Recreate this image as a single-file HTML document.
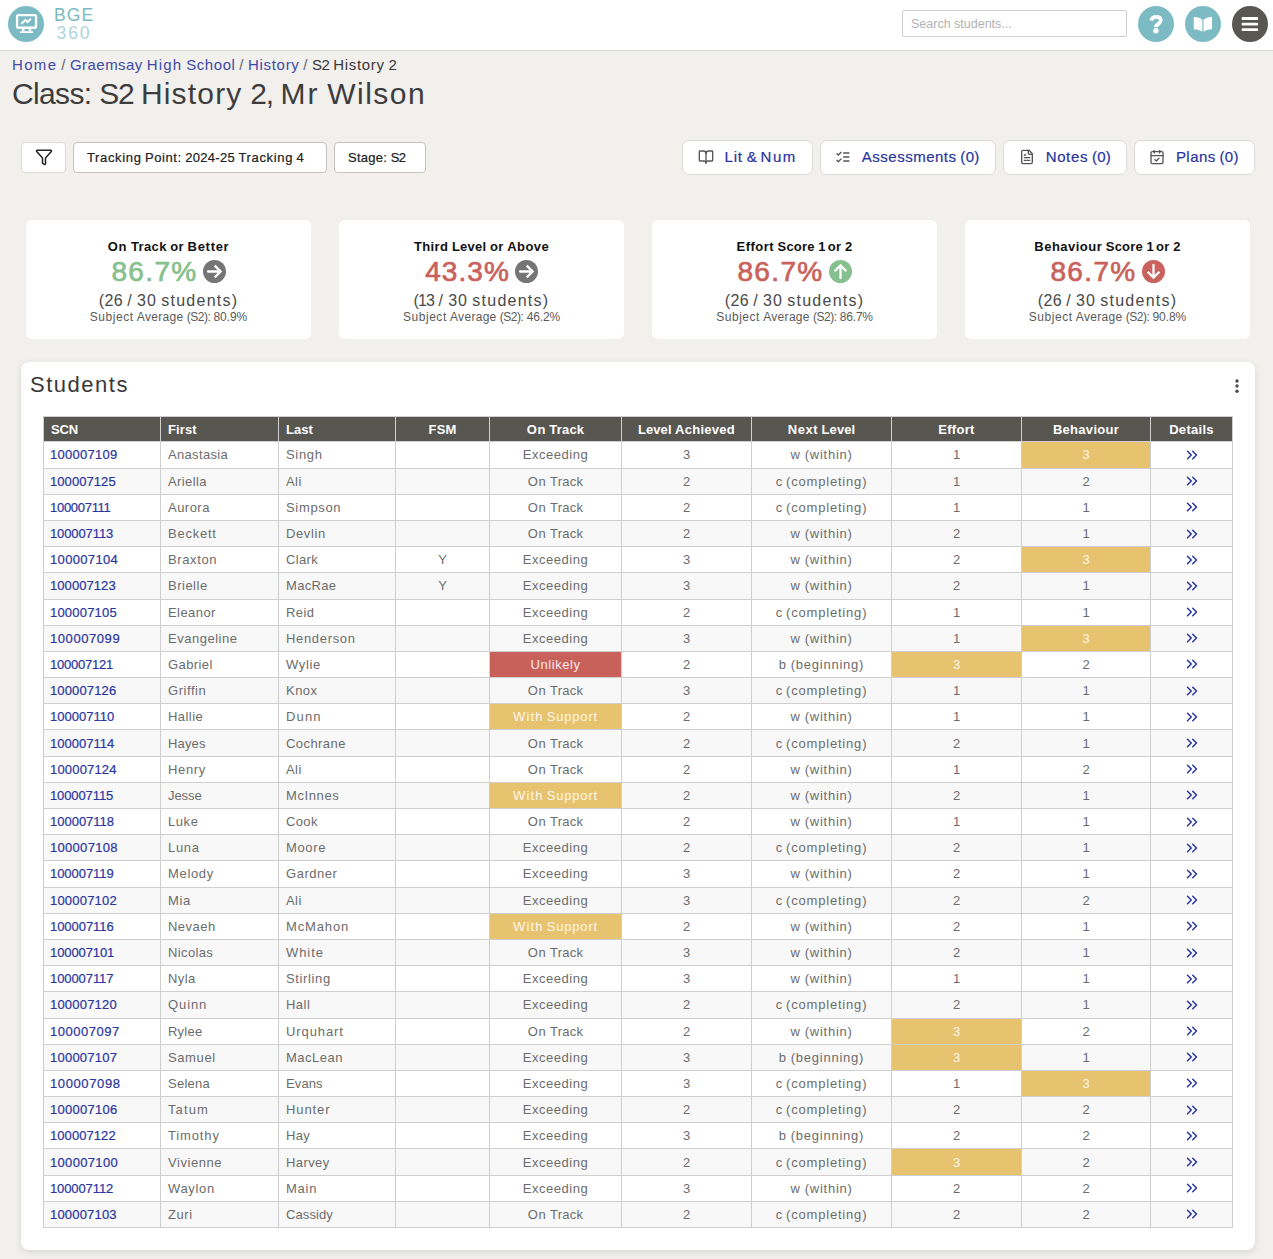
<!DOCTYPE html>
<html lang="en"><head><meta charset="utf-8"><title>Class: S2 History 2, Mr Wilson</title>
<style>
*{box-sizing:border-box;margin:0;padding:0}
html,body{width:1273px;height:1259px;overflow:hidden}
body{background:#f1f0ed;font-family:"Liberation Sans",sans-serif;color:#222;position:relative}
.t{white-space:nowrap}
a{color:#2a35a0;text-decoration:none}
.abs{position:absolute}
/* header */
#hdr{position:absolute;left:0;top:0;width:1273px;height:51px;background:#fff;border-bottom:1px solid #d9d8d5}
.circ{position:absolute;top:6px;width:36px;height:36px;border-radius:50%;background:#7dbbc4}
.circ svg{position:absolute;left:0;top:0}
#logo1{position:absolute;left:54px;top:5px;font-size:17.5px;line-height:20px;font-weight:500;color:#7dbbc4}
#logo2{position:absolute;left:56.5px;top:23px;font-size:17.5px;line-height:20px;font-weight:300;color:#aed5da}
#search{position:absolute;left:902px;top:10px;width:225px;height:27px;border:1px solid #cfcfcf;border-radius:2px;background:#fff;font-family:"Liberation Sans",sans-serif;font-size:12.5px;line-height:27px;color:#b2b2b2;padding-left:8px}
/* breadcrumb + title */
#bc{position:absolute;left:12px;top:55px;font-size:15px;line-height:20px;color:#383838;white-space:nowrap}
#bc .sep{color:#666}
#bc a{color:#3f49a8}
#ttl{position:absolute;left:12px;top:76px;font-size:30px;line-height:36px;font-weight:400;color:#3d3d3d;white-space:nowrap}
/* toolbar */
.btn{position:absolute;background:#fff;border:1px solid #dcdbd8;border-radius:5px}
.btn .t{position:absolute;top:0}
.fb{top:142px;height:31px;font-size:13px;line-height:29px;font-weight:500;color:#222;border-color:#c4c3c0;border-radius:4px}
.nb{top:140px;height:35px;font-size:15px;line-height:31px;font-weight:500;color:#2a35a0;border-radius:7px}
.nb svg{position:absolute}
/* stat cards */
.stat{position:absolute;top:220px;width:285px;height:119px;background:#fff;border-radius:6px}
.stat div{position:absolute;left:0;width:285px;text-align:center;white-space:nowrap}
.stat .h{top:18px;font-size:13px;line-height:18px;font-weight:600;color:#111}
.stat .p{top:34px;font-size:28px;line-height:36px;font-weight:400}
.sp{-webkit-text-stroke:.7px currentColor}
.stat .p svg{vertical-align:-2px;margin-left:5px}
.stat .n{top:71px;font-size:16px;line-height:20px;color:#494949}
.stat .a{top:89px;font-size:12px;line-height:16px;color:#5a5a5a}
.grn{color:#86c08e}.rd{color:#c9625c}
/* students card */
#card{position:absolute;left:21px;top:362px;width:1234px;height:888px;background:#fff;border-radius:8px;box-shadow:0 2px 7px rgba(0,0,0,.11)}
#card h2{position:absolute;left:9px;top:8px;font-size:22px;line-height:30px;font-weight:400;color:#393939}
#dots{position:absolute;left:1213px;top:16px}
table{position:absolute;left:22px;top:54.4px;width:1189px;border-collapse:collapse;table-layout:fixed;font-size:13px}
th,td{border:1px solid #cfcfcf;padding:0 7px;white-space:nowrap;overflow:hidden;text-align:left}
th{background:#585651;color:#fff;font-weight:600;height:25px;line-height:23px;border-color:#cfcfcf}
td{height:26.2px;line-height:25px;color:#6c6c6c}
td:first-child{padding-left:6px}
tr:nth-child(even) td{background:#f8f8f8}
.c{text-align:center}
td.amb{background:#e7c370 !important;color:#fcf7eb}
td.red{background:#c8615a !important;color:#f8eae9}
.chev{display:block;margin:0 auto}
.scn{font-weight:500}
#logo1{-webkit-text-stroke:.05px currentColor}
.nb .t,.fb .t,.scn{-webkit-text-stroke:.21px currentColor}
</style></head>
<body>
<div id="hdr">
  <div class="circ" style="left:8px"><svg width="36" height="36" viewBox="0 0 36 36"><rect x="9.05" y="9.15" width="19" height="12.6" rx="1.5" fill="none" stroke="#fff" stroke-width="2.3"/><rect x="14.1" y="22.6" width="2.4" height="2.8" fill="#fff"/><rect x="20.8" y="22.6" width="2.4" height="2.8" fill="#fff"/><rect x="12" y="25.2" width="13" height="1.9" rx=".4" fill="#fff"/><path d="M13.4 17.9l4.1-4 1.9 2.2 3.6-3.3" fill="none" stroke="#fff" stroke-width="2"/></svg></div>
  <div id="logo1"><span class="t logo1" style="letter-spacing:1.14px">BGE</span></div>
  <div id="logo2"><span class="t logo2" style="letter-spacing:1.9px">360</span></div>
  <div id="search">Search students...</div>
  <div class="circ" style="left:1138px"><svg width="36" height="36" viewBox="0 0 36 36"><path d="M13.2 14.4C13.9 11.9 15.8 10.9 18.2 10.9c2.8 0 4.5 1.5 4.5 3.6 0 3.5-4.7 3.2-4.7 6.7" fill="none" stroke="#fff" stroke-width="3.7"/><circle cx="17.9" cy="24.7" r="2.7" fill="#fff"/></svg></div>
  <div class="circ" style="left:1185px"><svg width="36" height="36" viewBox="0 0 36 36"><path d="M8.75 11.1c2.8 0 5.8.7 8.1 2.3v12.05c-2.3-1.45-5.3-2.15-8.1-2.25zM27.05 11.1c-2.8 0-5.8.7-8.1 2.3v12.05c2.3-1.45 5.3-2.15 8.1-2.25z" fill="#fff"/><rect x="16.85" y="13.5" width="2.1" height="11.9" fill="#fff" fill-opacity=".45"/></svg></div>
  <div class="circ" style="left:1232px;background:#595751"><svg width="36" height="36" viewBox="0 0 36 36"><rect x="9.7" y="11.1" width="16.4" height="2.8" rx=".7" fill="#fff"/><rect x="9.7" y="16.7" width="16.4" height="2.8" rx=".7" fill="#fff"/><rect x="9.7" y="22.3" width="16.4" height="2.8" rx=".7" fill="#fff"/></svg></div>
</div>
<div id="bc"><a><span class="t bc" style="letter-spacing:1.34px">Home</span></a><span class="sep"><span class="t bc" style="word-spacing:-0.33px"> <span class="w" style="letter-spacing:0.73px">/</span> </span></span><a><span class="t bc" style="word-spacing:-0.33px"><span class="w" style="letter-spacing:0.46px">Graemsay</span> <span class="w" style="letter-spacing:1.21px">High</span> <span class="w" style="letter-spacing:0.56px">School</span></span></a><span class="sep"><span class="t bc" style="word-spacing:-0.33px"> <span class="w" style="letter-spacing:0.73px">/</span> </span></span><a><span class="t bc" style="letter-spacing:0.68px">History</span></a><span class="sep"><span class="t bc" style="word-spacing:-0.33px"> <span class="w" style="letter-spacing:0.73px">/</span> </span></span><span class="t bcl" style="word-spacing:-0.33px"><span class="w" style="letter-spacing:-0.53px">S2</span> <span class="w" style="letter-spacing:0.68px">History</span> <span class="w" style="letter-spacing:-0.03px">2</span></span></div>
<div id="ttl"><span class="t ttl" style="word-spacing:-0.76px"><span class="w" style="letter-spacing:-0.63px">Class:</span> <span class="w" style="letter-spacing:-1.27px">S2</span> <span class="w" style="letter-spacing:1.19px">History</span> <span class="w" style="letter-spacing:-1.11px">2,</span> <span class="w" style="letter-spacing:2.09px">Mr</span> <span class="w" style="letter-spacing:1.47px">Wilson</span></span></div>

<div class="btn fb" style="left:21px;width:45px;border-color:#dcdbd8"><svg width="18" height="18" viewBox="0 0 24 24" style="position:absolute;left:13.2px;top:4.9px" fill="none" stroke="#222" stroke-width="2" stroke-linecap="round" stroke-linejoin="round"><path d="M10 20a1 1 0 0 0 .553.895l2 1A1 1 0 0 0 14 21v-7a2 2 0 0 1 .517-1.341L21.74 4.67A1 1 0 0 0 21 3H3a1 1 0 0 0-.742 1.67l7.225 7.989A2 2 0 0 1 10 14z"/></svg></div>
<div class="btn fb" style="left:73px;width:254px"><span style="position:absolute;left:13px;top:0"><span class="t fb" style="word-spacing:-0.21px"><span class="w" style="letter-spacing:0.65px">Tracking</span> <span class="w" style="letter-spacing:0.59px">Point:</span> <span class="w" style="letter-spacing:0.31px">2024-25</span> <span class="w" style="letter-spacing:0.65px">Tracking</span> <span class="w" style="letter-spacing:1.13px">4</span></span></span></div>
<div class="btn fb" style="left:334px;width:92px"><span style="position:absolute;left:13px;top:0"><span class="t fb" style="word-spacing:-0.21px"><span class="w" style="letter-spacing:0.28px">Stage:</span> <span class="w" style="letter-spacing:-0.48px">S2</span></span></span></div>

<div class="btn nb" style="left:682px;width:131px"><svg width="16" height="16" viewBox="0 0 24 24" style="left:15.1px;top:8px" fill="none" stroke="#555" stroke-width="2" stroke-linecap="round" stroke-linejoin="round"><path d="M12 7v14"/><path d="M3 18a1 1 0 0 1-1-1V4a1 1 0 0 1 1-1h5a4 4 0 0 1 4 4 4 4 0 0 1 4-4h5a1 1 0 0 1 1 1v13a1 1 0 0 1-1 1h-6a3 3 0 0 0-3 3 3 3 0 0 0-3-3z"/></svg><span style="position:absolute;left:41.5px;top:0"><span class="t nb" style="word-spacing:-0.31px"><span class="w" style="letter-spacing:0.85px">Lit</span> <span class="w" style="letter-spacing:-0.19px">&amp;</span> <span class="w" style="letter-spacing:1.6px">Num</span></span></span></div>
<div class="btn nb" style="left:820px;width:175.5px"><svg width="16" height="16" viewBox="0 0 24 24" style="left:13.8px;top:8px" fill="none" stroke="#555" stroke-width="2" stroke-linecap="round" stroke-linejoin="round"><path d="m3 17 2 2 4-4"/><path d="m3 7 2 2 4-4"/><path d="M13 6h8"/><path d="M13 12h8"/><path d="M13 18h8"/></svg><span style="position:absolute;left:40.8px;top:0"><span class="t nb" style="word-spacing:-0.31px"><span class="w" style="letter-spacing:0.5px">Assessments</span> <span class="w" style="letter-spacing:0.3px">(0)</span></span></span></div>
<div class="btn nb" style="left:1003px;width:124px"><svg width="16" height="16" viewBox="0 0 24 24" style="left:15.2px;top:8px" fill="none" stroke="#555" stroke-width="2" stroke-linecap="round" stroke-linejoin="round"><path d="M15 2H6a2 2 0 0 0-2 2v16a2 2 0 0 0 2 2h12a2 2 0 0 0 2-2V7Z"/><path d="M14 2v4a2 2 0 0 0 2 2h4"/><path d="M10 9H8"/><path d="M16 13H8"/><path d="M16 17H8"/></svg><span style="position:absolute;left:41.7px;top:0"><span class="t nb" style="word-spacing:-0.31px"><span class="w" style="letter-spacing:0.63px">Notes</span> <span class="w" style="letter-spacing:0.3px">(0)</span></span></span></div>
<div class="btn nb" style="left:1134px;width:121px"><svg width="16" height="16" viewBox="0 0 24 24" style="left:13.5px;top:8px" fill="none" stroke="#555" stroke-width="2" stroke-linecap="round" stroke-linejoin="round"><path d="M8 2v4"/><path d="M16 2v4"/><rect width="18" height="18" x="3" y="4" rx="2"/><path d="M3 10h18"/><path d="m9 16 2 2 4-4"/></svg><span style="position:absolute;left:40.9px;top:0"><span class="t nb" style="word-spacing:-0.31px"><span class="w" style="letter-spacing:0.46px">Plans</span> <span class="w" style="letter-spacing:0.3px">(0)</span></span></span></div>

<div class="stat" style="left:26px"><div class="h"><span class="t sh" style="word-spacing:-0.06px"><span class="w" style="letter-spacing:0.8px">On</span> <span class="w" style="letter-spacing:0.38px">Track</span> <span class="w" style="letter-spacing:0.36px">or</span> <span class="w" style="letter-spacing:0.69px">Better</span></span></div><div class="p grn"><span class="t sp" style="letter-spacing:1.35px">86.7%</span><svg width="23" height="23" viewBox="0 0 23 23"><circle cx="11.5" cy="11.5" r="11.5" fill="#757575"/><path d="M5 11.5h12" fill="none" stroke="#fff" stroke-width="2.3" stroke-linecap="round"/><path d="M11.7 5.6l5.9 5.9-5.9 5.9" fill="none" stroke="#fff" stroke-width="2.3" stroke-linejoin="miter"/></svg></div><div class="n"><span class="t sn" style="word-spacing:-0.18px"><span class="w" style="letter-spacing:0.43px">(26</span> <span class="w" style="letter-spacing:1.01px">/</span> <span class="w" style="letter-spacing:1.06px">30</span> <span class="w" style="letter-spacing:1.25px">students)</span></span></div><div class="a"><span class="t sa" style="word-spacing:-0.1px"><span class="w" style="letter-spacing:0.54px">Subject</span> <span class="w" style="letter-spacing:0.3px">Average</span> <span class="w" style="letter-spacing:-0.49px">(S2):</span> <span class="w" style="letter-spacing:-0.06px">80.9%</span></span></div></div>
<div class="stat" style="left:339px"><div class="h"><span class="t sh" style="word-spacing:-0.06px"><span class="w" style="letter-spacing:0.38px">Third</span> <span class="w" style="letter-spacing:0.25px">Level</span> <span class="w" style="letter-spacing:0.36px">or</span> <span class="w" style="letter-spacing:0.42px">Above</span></span></div><div class="p rd"><span class="t sp" style="letter-spacing:1.06px">43.3%</span><svg width="23" height="23" viewBox="0 0 23 23"><circle cx="11.5" cy="11.5" r="11.5" fill="#757575"/><path d="M5 11.5h12" fill="none" stroke="#fff" stroke-width="2.3" stroke-linecap="round"/><path d="M11.7 5.6l5.9 5.9-5.9 5.9" fill="none" stroke="#fff" stroke-width="2.3" stroke-linejoin="miter"/></svg></div><div class="n"><span class="t sn" style="word-spacing:-0.18px"><span class="w" style="letter-spacing:-0.86px">(13</span> <span class="w" style="letter-spacing:1.01px">/</span> <span class="w" style="letter-spacing:1.06px">30</span> <span class="w" style="letter-spacing:1.25px">students)</span></span></div><div class="a"><span class="t sa" style="word-spacing:-0.1px"><span class="w" style="letter-spacing:0.54px">Subject</span> <span class="w" style="letter-spacing:0.3px">Average</span> <span class="w" style="letter-spacing:-0.49px">(S2):</span> <span class="w" style="letter-spacing:-0.13px">46.2%</span></span></div></div>
<div class="stat" style="left:652px"><div class="h"><span class="t sh" style="word-spacing:-0.06px"><span class="w" style="letter-spacing:0.46px">Effort</span> <span class="w" style="letter-spacing:0.18px">Score</span> <span class="w" style="letter-spacing:-1.3px">1</span> <span class="w" style="letter-spacing:0.36px">or</span> <span class="w" style="letter-spacing:0.27px">2</span></span></div><div class="p rd"><span class="t sp" style="letter-spacing:1.35px">86.7%</span><svg width="23" height="23" viewBox="0 0 23 23"><circle cx="11.5" cy="11.5" r="11.5" fill="#86c08e"/><path d="M11.5 18v-12" fill="none" stroke="#fff" stroke-width="2.3" stroke-linecap="round"/><path d="M5.6 11.3l5.9-5.9 5.9 5.9" fill="none" stroke="#fff" stroke-width="2.3" stroke-linejoin="miter"/></svg></div><div class="n"><span class="t sn" style="word-spacing:-0.18px"><span class="w" style="letter-spacing:0.43px">(26</span> <span class="w" style="letter-spacing:1.01px">/</span> <span class="w" style="letter-spacing:1.06px">30</span> <span class="w" style="letter-spacing:1.25px">students)</span></span></div><div class="a"><span class="t sa" style="word-spacing:-0.1px"><span class="w" style="letter-spacing:0.54px">Subject</span> <span class="w" style="letter-spacing:0.3px">Average</span> <span class="w" style="letter-spacing:-0.49px">(S2):</span> <span class="w" style="letter-spacing:-0.21px">86.7%</span></span></div></div>
<div class="stat" style="left:965px"><div class="h"><span class="t sh" style="word-spacing:-0.06px"><span class="w" style="letter-spacing:0.48px">Behaviour</span> <span class="w" style="letter-spacing:0.18px">Score</span> <span class="w" style="letter-spacing:-1.3px">1</span> <span class="w" style="letter-spacing:0.36px">or</span> <span class="w" style="letter-spacing:0.27px">2</span></span></div><div class="p rd"><span class="t sp" style="letter-spacing:1.35px">86.7%</span><svg width="23" height="23" viewBox="0 0 23 23"><circle cx="11.5" cy="11.5" r="11.5" fill="#c9625c"/><path d="M11.5 5v12" fill="none" stroke="#fff" stroke-width="2.3" stroke-linecap="round"/><path d="M5.6 11.7l5.9 5.9 5.9-5.9" fill="none" stroke="#fff" stroke-width="2.3" stroke-linejoin="miter"/></svg></div><div class="n"><span class="t sn" style="word-spacing:-0.18px"><span class="w" style="letter-spacing:0.43px">(26</span> <span class="w" style="letter-spacing:1.01px">/</span> <span class="w" style="letter-spacing:1.06px">30</span> <span class="w" style="letter-spacing:1.25px">students)</span></span></div><div class="a"><span class="t sa" style="word-spacing:-0.1px"><span class="w" style="letter-spacing:0.54px">Subject</span> <span class="w" style="letter-spacing:0.3px">Average</span> <span class="w" style="letter-spacing:-0.49px">(S2):</span> <span class="w" style="letter-spacing:-0.06px">90.8%</span></span></div></div>

<div id="card">
<h2><span class="t h2" style="letter-spacing:1.52px">Students</span></h2>
<svg id="dots" width="6" height="18" viewBox="0 0 6 18"><circle cx="3" cy="3" r="1.7" fill="#4f4d48"/><circle cx="3" cy="8" r="1.7" fill="#4f4d48"/><circle cx="3" cy="13.2" r="1.7" fill="#4f4d48"/></svg>
<table>
<colgroup><col style="width:117px"><col style="width:118px"><col style="width:117px"><col style="width:94px"><col style="width:132px"><col style="width:130px"><col style="width:140px"><col style="width:130px"><col style="width:129px"><col style="width:82px"></colgroup>
<thead><tr><th><span class="t th" style="letter-spacing:-0.13px">SCN</span></th><th><span class="t th" style="letter-spacing:0.1px">First</span></th><th><span class="t th" style="letter-spacing:0.05px">Last</span></th><th class="c"><span class="t th" style="letter-spacing:0.14px">FSM</span></th><th class="c"><span class="t th" style="word-spacing:-0.15px"><span class="w" style="letter-spacing:0.55px">On</span> <span class="w" style="letter-spacing:0.19px">Track</span></span></th><th class="c"><span class="t th" style="word-spacing:-0.15px"><span class="w" style="letter-spacing:0.07px">Level</span> <span class="w" style="letter-spacing:0.27px">Achieved</span></span></th><th class="c"><span class="t th" style="word-spacing:-0.15px"><span class="w" style="letter-spacing:0.53px">Next</span> <span class="w" style="letter-spacing:0.07px">Level</span></span></th><th class="c"><span class="t th" style="letter-spacing:0.3px">Effort</span></th><th class="c"><span class="t th" style="letter-spacing:0.29px">Behaviour</span></th><th class="c"><span class="t th" style="letter-spacing:0.28px">Details</span></th></tr></thead>
<tbody>
<tr><td><a><span class="t scn" style="letter-spacing:0.26px">100007109</span></a></td><td><span class="t cell" style="letter-spacing:0.33px">Anastasia</span></td><td><span class="t cell" style="letter-spacing:0.67px">Singh</span></td><td class="c"></td><td class="c"><span class="t cell" style="letter-spacing:0.54px">Exceeding</span></td><td class="c"><span class="t cell">3</span></td><td class="c"><span class="t cell" style="word-spacing:-0.35px"><span class="w" style="letter-spacing:1.62px">w</span> <span class="w" style="letter-spacing:0.75px">(within)</span></span></td><td class="c"><span class="t cell">1</span></td><td class="c amb"><span class="t cell">3</span></td><td class="c"><svg class="chev" width="18" height="18" viewBox="0 0 24 24" fill="none" stroke="#2a35a0" stroke-width="2" stroke-linecap="round" stroke-linejoin="round"><path d="m6 17 5-5-5-5"/><path d="m13 17 5-5-5-5"/></svg></td></tr>
<tr><td><a><span class="t scn" style="letter-spacing:0.07px">100007125</span></a></td><td><span class="t cell" style="letter-spacing:0.41px">Ariella</span></td><td><span class="t cell" style="letter-spacing:0.42px">Ali</span></td><td class="c"></td><td class="c"><span class="t cell" style="word-spacing:-0.35px"><span class="w" style="letter-spacing:0.81px">On</span> <span class="w" style="letter-spacing:0.27px">Track</span></span></td><td class="c"><span class="t cell">2</span></td><td class="c"><span class="t cell" style="word-spacing:-0.35px"><span class="w" style="letter-spacing:0.56px">c</span> <span class="w" style="letter-spacing:0.81px">(completing)</span></span></td><td class="c"><span class="t cell">1</span></td><td class="c"><span class="t cell">2</span></td><td class="c"><svg class="chev" width="18" height="18" viewBox="0 0 24 24" fill="none" stroke="#2a35a0" stroke-width="2" stroke-linecap="round" stroke-linejoin="round"><path d="m6 17 5-5-5-5"/><path d="m13 17 5-5-5-5"/></svg></td></tr>
<tr><td><a><span class="t scn" style="letter-spacing:-0.29px">100007111</span></a></td><td><span class="t cell" style="letter-spacing:0.47px">Aurora</span></td><td><span class="t cell" style="letter-spacing:0.67px">Simpson</span></td><td class="c"></td><td class="c"><span class="t cell" style="word-spacing:-0.35px"><span class="w" style="letter-spacing:0.81px">On</span> <span class="w" style="letter-spacing:0.27px">Track</span></span></td><td class="c"><span class="t cell">2</span></td><td class="c"><span class="t cell" style="word-spacing:-0.35px"><span class="w" style="letter-spacing:0.56px">c</span> <span class="w" style="letter-spacing:0.81px">(completing)</span></span></td><td class="c"><span class="t cell">1</span></td><td class="c"><span class="t cell">1</span></td><td class="c"><svg class="chev" width="18" height="18" viewBox="0 0 24 24" fill="none" stroke="#2a35a0" stroke-width="2" stroke-linecap="round" stroke-linejoin="round"><path d="m6 17 5-5-5-5"/><path d="m13 17 5-5-5-5"/></svg></td></tr>
<tr><td><a><span class="t scn" style="letter-spacing:-0.11px">100007113</span></a></td><td><span class="t cell" style="letter-spacing:0.77px">Beckett</span></td><td><span class="t cell" style="letter-spacing:0.61px">Devlin</span></td><td class="c"></td><td class="c"><span class="t cell" style="word-spacing:-0.35px"><span class="w" style="letter-spacing:0.81px">On</span> <span class="w" style="letter-spacing:0.27px">Track</span></span></td><td class="c"><span class="t cell">2</span></td><td class="c"><span class="t cell" style="word-spacing:-0.35px"><span class="w" style="letter-spacing:1.62px">w</span> <span class="w" style="letter-spacing:0.75px">(within)</span></span></td><td class="c"><span class="t cell">2</span></td><td class="c"><span class="t cell">1</span></td><td class="c"><svg class="chev" width="18" height="18" viewBox="0 0 24 24" fill="none" stroke="#2a35a0" stroke-width="2" stroke-linecap="round" stroke-linejoin="round"><path d="m6 17 5-5-5-5"/><path d="m13 17 5-5-5-5"/></svg></td></tr>
<tr><td><a><span class="t scn" style="letter-spacing:0.34px">100007104</span></a></td><td><span class="t cell" style="letter-spacing:0.63px">Braxton</span></td><td><span class="t cell" style="letter-spacing:0.34px">Clark</span></td><td class="c"><span class="t cell">Y</span></td><td class="c"><span class="t cell" style="letter-spacing:0.54px">Exceeding</span></td><td class="c"><span class="t cell">3</span></td><td class="c"><span class="t cell" style="word-spacing:-0.35px"><span class="w" style="letter-spacing:1.62px">w</span> <span class="w" style="letter-spacing:0.75px">(within)</span></span></td><td class="c"><span class="t cell">2</span></td><td class="c amb"><span class="t cell">3</span></td><td class="c"><svg class="chev" width="18" height="18" viewBox="0 0 24 24" fill="none" stroke="#2a35a0" stroke-width="2" stroke-linecap="round" stroke-linejoin="round"><path d="m6 17 5-5-5-5"/><path d="m13 17 5-5-5-5"/></svg></td></tr>
<tr><td><a><span class="t scn" style="letter-spacing:0.07px">100007123</span></a></td><td><span class="t cell" style="letter-spacing:0.5px">Brielle</span></td><td><span class="t cell" style="letter-spacing:0.32px">MacRae</span></td><td class="c"><span class="t cell">Y</span></td><td class="c"><span class="t cell" style="letter-spacing:0.54px">Exceeding</span></td><td class="c"><span class="t cell">3</span></td><td class="c"><span class="t cell" style="word-spacing:-0.35px"><span class="w" style="letter-spacing:1.62px">w</span> <span class="w" style="letter-spacing:0.75px">(within)</span></span></td><td class="c"><span class="t cell">2</span></td><td class="c"><span class="t cell">1</span></td><td class="c"><svg class="chev" width="18" height="18" viewBox="0 0 24 24" fill="none" stroke="#2a35a0" stroke-width="2" stroke-linecap="round" stroke-linejoin="round"><path d="m6 17 5-5-5-5"/><path d="m13 17 5-5-5-5"/></svg></td></tr>
<tr><td><a><span class="t scn" style="letter-spacing:0.2px">100007105</span></a></td><td><span class="t cell" style="letter-spacing:0.43px">Eleanor</span></td><td><span class="t cell" style="letter-spacing:0.43px">Reid</span></td><td class="c"></td><td class="c"><span class="t cell" style="letter-spacing:0.54px">Exceeding</span></td><td class="c"><span class="t cell">2</span></td><td class="c"><span class="t cell" style="word-spacing:-0.35px"><span class="w" style="letter-spacing:0.56px">c</span> <span class="w" style="letter-spacing:0.81px">(completing)</span></span></td><td class="c"><span class="t cell">1</span></td><td class="c"><span class="t cell">1</span></td><td class="c"><svg class="chev" width="18" height="18" viewBox="0 0 24 24" fill="none" stroke="#2a35a0" stroke-width="2" stroke-linecap="round" stroke-linejoin="round"><path d="m6 17 5-5-5-5"/><path d="m13 17 5-5-5-5"/></svg></td></tr>
<tr><td><a><span class="t scn" style="letter-spacing:0.57px">100007099</span></a></td><td><span class="t cell" style="letter-spacing:0.52px">Evangeline</span></td><td><span class="t cell" style="letter-spacing:0.67px">Henderson</span></td><td class="c"></td><td class="c"><span class="t cell" style="letter-spacing:0.54px">Exceeding</span></td><td class="c"><span class="t cell">3</span></td><td class="c"><span class="t cell" style="word-spacing:-0.35px"><span class="w" style="letter-spacing:1.62px">w</span> <span class="w" style="letter-spacing:0.75px">(within)</span></span></td><td class="c"><span class="t cell">1</span></td><td class="c amb"><span class="t cell">3</span></td><td class="c"><svg class="chev" width="18" height="18" viewBox="0 0 24 24" fill="none" stroke="#2a35a0" stroke-width="2" stroke-linecap="round" stroke-linejoin="round"><path d="m6 17 5-5-5-5"/><path d="m13 17 5-5-5-5"/></svg></td></tr>
<tr><td><a><span class="t scn" style="letter-spacing:-0.22px">100007121</span></a></td><td><span class="t cell" style="letter-spacing:0.41px">Gabriel</span></td><td><span class="t cell" style="letter-spacing:0.67px">Wylie</span></td><td class="c"></td><td class="c red"><span class="t cell" style="letter-spacing:0.56px">Unlikely</span></td><td class="c"><span class="t cell">2</span></td><td class="c"><span class="t cell" style="word-spacing:-0.35px"><span class="w" style="letter-spacing:1.27px">b</span> <span class="w" style="letter-spacing:0.77px">(beginning)</span></span></td><td class="c amb"><span class="t cell">3</span></td><td class="c"><span class="t cell">2</span></td><td class="c"><svg class="chev" width="18" height="18" viewBox="0 0 24 24" fill="none" stroke="#2a35a0" stroke-width="2" stroke-linecap="round" stroke-linejoin="round"><path d="m6 17 5-5-5-5"/><path d="m13 17 5-5-5-5"/></svg></td></tr>
<tr><td><a><span class="t scn" style="letter-spacing:0.13px">100007126</span></a></td><td><span class="t cell" style="letter-spacing:0.55px">Griffin</span></td><td><span class="t cell" style="letter-spacing:0.48px">Knox</span></td><td class="c"></td><td class="c"><span class="t cell" style="word-spacing:-0.35px"><span class="w" style="letter-spacing:0.81px">On</span> <span class="w" style="letter-spacing:0.27px">Track</span></span></td><td class="c"><span class="t cell">3</span></td><td class="c"><span class="t cell" style="word-spacing:-0.35px"><span class="w" style="letter-spacing:0.56px">c</span> <span class="w" style="letter-spacing:0.81px">(completing)</span></span></td><td class="c"><span class="t cell">1</span></td><td class="c"><span class="t cell">1</span></td><td class="c"><svg class="chev" width="18" height="18" viewBox="0 0 24 24" fill="none" stroke="#2a35a0" stroke-width="2" stroke-linecap="round" stroke-linejoin="round"><path d="m6 17 5-5-5-5"/><path d="m13 17 5-5-5-5"/></svg></td></tr>
<tr><td><a><span class="t scn" style="letter-spacing:0.02px">100007110</span></a></td><td><span class="t cell" style="letter-spacing:0.45px">Hallie</span></td><td><span class="t cell" style="letter-spacing:1.15px">Dunn</span></td><td class="c"></td><td class="c amb"><span class="t cell" style="word-spacing:-0.35px"><span class="w" style="letter-spacing:1.12px">With</span> <span class="w" style="letter-spacing:0.81px">Support</span></span></td><td class="c"><span class="t cell">2</span></td><td class="c"><span class="t cell" style="word-spacing:-0.35px"><span class="w" style="letter-spacing:1.62px">w</span> <span class="w" style="letter-spacing:0.75px">(within)</span></span></td><td class="c"><span class="t cell">1</span></td><td class="c"><span class="t cell">1</span></td><td class="c"><svg class="chev" width="18" height="18" viewBox="0 0 24 24" fill="none" stroke="#2a35a0" stroke-width="2" stroke-linecap="round" stroke-linejoin="round"><path d="m6 17 5-5-5-5"/><path d="m13 17 5-5-5-5"/></svg></td></tr>
<tr><td><a><span class="t scn" style="letter-spacing:0.02px">100007114</span></a></td><td><span class="t cell" style="letter-spacing:0.15px">Hayes</span></td><td><span class="t cell" style="letter-spacing:0.43px">Cochrane</span></td><td class="c"></td><td class="c"><span class="t cell" style="word-spacing:-0.35px"><span class="w" style="letter-spacing:0.81px">On</span> <span class="w" style="letter-spacing:0.27px">Track</span></span></td><td class="c"><span class="t cell">2</span></td><td class="c"><span class="t cell" style="word-spacing:-0.35px"><span class="w" style="letter-spacing:0.56px">c</span> <span class="w" style="letter-spacing:0.81px">(completing)</span></span></td><td class="c"><span class="t cell">2</span></td><td class="c"><span class="t cell">1</span></td><td class="c"><svg class="chev" width="18" height="18" viewBox="0 0 24 24" fill="none" stroke="#2a35a0" stroke-width="2" stroke-linecap="round" stroke-linejoin="round"><path d="m6 17 5-5-5-5"/><path d="m13 17 5-5-5-5"/></svg></td></tr>
<tr><td><a><span class="t scn" style="letter-spacing:0.18px">100007124</span></a></td><td><span class="t cell" style="letter-spacing:0.65px">Henry</span></td><td><span class="t cell" style="letter-spacing:0.42px">Ali</span></td><td class="c"></td><td class="c"><span class="t cell" style="word-spacing:-0.35px"><span class="w" style="letter-spacing:0.81px">On</span> <span class="w" style="letter-spacing:0.27px">Track</span></span></td><td class="c"><span class="t cell">2</span></td><td class="c"><span class="t cell" style="word-spacing:-0.35px"><span class="w" style="letter-spacing:1.62px">w</span> <span class="w" style="letter-spacing:0.75px">(within)</span></span></td><td class="c"><span class="t cell">1</span></td><td class="c"><span class="t cell">2</span></td><td class="c"><svg class="chev" width="18" height="18" viewBox="0 0 24 24" fill="none" stroke="#2a35a0" stroke-width="2" stroke-linecap="round" stroke-linejoin="round"><path d="m6 17 5-5-5-5"/><path d="m13 17 5-5-5-5"/></svg></td></tr>
<tr><td><a><span class="t scn" style="letter-spacing:-0.11px">100007115</span></a></td><td><span class="t cell" style="letter-spacing:-0.07px">Jesse</span></td><td><span class="t cell" style="letter-spacing:0.61px">McInnes</span></td><td class="c"></td><td class="c amb"><span class="t cell" style="word-spacing:-0.35px"><span class="w" style="letter-spacing:1.12px">With</span> <span class="w" style="letter-spacing:0.81px">Support</span></span></td><td class="c"><span class="t cell">2</span></td><td class="c"><span class="t cell" style="word-spacing:-0.35px"><span class="w" style="letter-spacing:1.62px">w</span> <span class="w" style="letter-spacing:0.75px">(within)</span></span></td><td class="c"><span class="t cell">2</span></td><td class="c"><span class="t cell">1</span></td><td class="c"><svg class="chev" width="18" height="18" viewBox="0 0 24 24" fill="none" stroke="#2a35a0" stroke-width="2" stroke-linecap="round" stroke-linejoin="round"><path d="m6 17 5-5-5-5"/><path d="m13 17 5-5-5-5"/></svg></td></tr>
<tr><td><a><span class="t scn" style="letter-spacing:-0.01px">100007118</span></a></td><td><span class="t cell" style="letter-spacing:0.57px">Luke</span></td><td><span class="t cell" style="letter-spacing:0.36px">Cook</span></td><td class="c"></td><td class="c"><span class="t cell" style="word-spacing:-0.35px"><span class="w" style="letter-spacing:0.81px">On</span> <span class="w" style="letter-spacing:0.27px">Track</span></span></td><td class="c"><span class="t cell">2</span></td><td class="c"><span class="t cell" style="word-spacing:-0.35px"><span class="w" style="letter-spacing:1.62px">w</span> <span class="w" style="letter-spacing:0.75px">(within)</span></span></td><td class="c"><span class="t cell">1</span></td><td class="c"><span class="t cell">1</span></td><td class="c"><svg class="chev" width="18" height="18" viewBox="0 0 24 24" fill="none" stroke="#2a35a0" stroke-width="2" stroke-linecap="round" stroke-linejoin="round"><path d="m6 17 5-5-5-5"/><path d="m13 17 5-5-5-5"/></svg></td></tr>
<tr><td><a><span class="t scn" style="letter-spacing:0.3px">100007108</span></a></td><td><span class="t cell" style="letter-spacing:0.66px">Luna</span></td><td><span class="t cell" style="letter-spacing:0.64px">Moore</span></td><td class="c"></td><td class="c"><span class="t cell" style="letter-spacing:0.54px">Exceeding</span></td><td class="c"><span class="t cell">2</span></td><td class="c"><span class="t cell" style="word-spacing:-0.35px"><span class="w" style="letter-spacing:0.56px">c</span> <span class="w" style="letter-spacing:0.81px">(completing)</span></span></td><td class="c"><span class="t cell">2</span></td><td class="c"><span class="t cell">1</span></td><td class="c"><svg class="chev" width="18" height="18" viewBox="0 0 24 24" fill="none" stroke="#2a35a0" stroke-width="2" stroke-linecap="round" stroke-linejoin="round"><path d="m6 17 5-5-5-5"/><path d="m13 17 5-5-5-5"/></svg></td></tr>
<tr><td><a><span class="t scn" style="letter-spacing:-0.05px">100007119</span></a></td><td><span class="t cell" style="letter-spacing:0.67px">Melody</span></td><td><span class="t cell" style="letter-spacing:0.54px">Gardner</span></td><td class="c"></td><td class="c"><span class="t cell" style="letter-spacing:0.54px">Exceeding</span></td><td class="c"><span class="t cell">3</span></td><td class="c"><span class="t cell" style="word-spacing:-0.35px"><span class="w" style="letter-spacing:1.62px">w</span> <span class="w" style="letter-spacing:0.75px">(within)</span></span></td><td class="c"><span class="t cell">2</span></td><td class="c"><span class="t cell">1</span></td><td class="c"><svg class="chev" width="18" height="18" viewBox="0 0 24 24" fill="none" stroke="#2a35a0" stroke-width="2" stroke-linecap="round" stroke-linejoin="round"><path d="m6 17 5-5-5-5"/><path d="m13 17 5-5-5-5"/></svg></td></tr>
<tr><td><a><span class="t scn" style="letter-spacing:0.2px">100007102</span></a></td><td><span class="t cell" style="letter-spacing:0.59px">Mia</span></td><td><span class="t cell" style="letter-spacing:0.42px">Ali</span></td><td class="c"></td><td class="c"><span class="t cell" style="letter-spacing:0.54px">Exceeding</span></td><td class="c"><span class="t cell">3</span></td><td class="c"><span class="t cell" style="word-spacing:-0.35px"><span class="w" style="letter-spacing:0.56px">c</span> <span class="w" style="letter-spacing:0.81px">(completing)</span></span></td><td class="c"><span class="t cell">2</span></td><td class="c"><span class="t cell">2</span></td><td class="c"><svg class="chev" width="18" height="18" viewBox="0 0 24 24" fill="none" stroke="#2a35a0" stroke-width="2" stroke-linecap="round" stroke-linejoin="round"><path d="m6 17 5-5-5-5"/><path d="m13 17 5-5-5-5"/></svg></td></tr>
<tr><td><a><span class="t scn" style="letter-spacing:-0.05px">100007116</span></a></td><td><span class="t cell" style="letter-spacing:0.46px">Nevaeh</span></td><td><span class="t cell" style="letter-spacing:0.86px">McMahon</span></td><td class="c"></td><td class="c amb"><span class="t cell" style="word-spacing:-0.35px"><span class="w" style="letter-spacing:1.12px">With</span> <span class="w" style="letter-spacing:0.81px">Support</span></span></td><td class="c"><span class="t cell">2</span></td><td class="c"><span class="t cell" style="word-spacing:-0.35px"><span class="w" style="letter-spacing:1.62px">w</span> <span class="w" style="letter-spacing:0.75px">(within)</span></span></td><td class="c"><span class="t cell">2</span></td><td class="c"><span class="t cell">1</span></td><td class="c"><svg class="chev" width="18" height="18" viewBox="0 0 24 24" fill="none" stroke="#2a35a0" stroke-width="2" stroke-linecap="round" stroke-linejoin="round"><path d="m6 17 5-5-5-5"/><path d="m13 17 5-5-5-5"/></svg></td></tr>
<tr><td><a><span class="t scn" style="letter-spacing:-0.09px">100007101</span></a></td><td><span class="t cell" style="letter-spacing:0.37px">Nicolas</span></td><td><span class="t cell" style="letter-spacing:0.92px">White</span></td><td class="c"></td><td class="c"><span class="t cell" style="word-spacing:-0.35px"><span class="w" style="letter-spacing:0.81px">On</span> <span class="w" style="letter-spacing:0.27px">Track</span></span></td><td class="c"><span class="t cell">3</span></td><td class="c"><span class="t cell" style="word-spacing:-0.35px"><span class="w" style="letter-spacing:1.62px">w</span> <span class="w" style="letter-spacing:0.75px">(within)</span></span></td><td class="c"><span class="t cell">2</span></td><td class="c"><span class="t cell">1</span></td><td class="c"><svg class="chev" width="18" height="18" viewBox="0 0 24 24" fill="none" stroke="#2a35a0" stroke-width="2" stroke-linecap="round" stroke-linejoin="round"><path d="m6 17 5-5-5-5"/><path d="m13 17 5-5-5-5"/></svg></td></tr>
<tr><td><a><span class="t scn" style="letter-spacing:-0.08px">100007117</span></a></td><td><span class="t cell" style="letter-spacing:0.43px">Nyla</span></td><td><span class="t cell" style="letter-spacing:0.64px">Stirling</span></td><td class="c"></td><td class="c"><span class="t cell" style="letter-spacing:0.54px">Exceeding</span></td><td class="c"><span class="t cell">3</span></td><td class="c"><span class="t cell" style="word-spacing:-0.35px"><span class="w" style="letter-spacing:1.62px">w</span> <span class="w" style="letter-spacing:0.75px">(within)</span></span></td><td class="c"><span class="t cell">1</span></td><td class="c"><span class="t cell">1</span></td><td class="c"><svg class="chev" width="18" height="18" viewBox="0 0 24 24" fill="none" stroke="#2a35a0" stroke-width="2" stroke-linecap="round" stroke-linejoin="round"><path d="m6 17 5-5-5-5"/><path d="m13 17 5-5-5-5"/></svg></td></tr>
<tr><td><a><span class="t scn" style="letter-spacing:0.2px">100007120</span></a></td><td><span class="t cell" style="letter-spacing:0.9px">Quinn</span></td><td><span class="t cell" style="letter-spacing:0.47px">Hall</span></td><td class="c"></td><td class="c"><span class="t cell" style="letter-spacing:0.54px">Exceeding</span></td><td class="c"><span class="t cell">2</span></td><td class="c"><span class="t cell" style="word-spacing:-0.35px"><span class="w" style="letter-spacing:0.56px">c</span> <span class="w" style="letter-spacing:0.81px">(completing)</span></span></td><td class="c"><span class="t cell">2</span></td><td class="c"><span class="t cell">1</span></td><td class="c"><svg class="chev" width="18" height="18" viewBox="0 0 24 24" fill="none" stroke="#2a35a0" stroke-width="2" stroke-linecap="round" stroke-linejoin="round"><path d="m6 17 5-5-5-5"/><path d="m13 17 5-5-5-5"/></svg></td></tr>
<tr><td><a><span class="t scn" style="letter-spacing:0.53px">100007097</span></a></td><td><span class="t cell" style="letter-spacing:0.22px">Rylee</span></td><td><span class="t cell" style="letter-spacing:0.91px">Urquhart</span></td><td class="c"></td><td class="c"><span class="t cell" style="word-spacing:-0.35px"><span class="w" style="letter-spacing:0.81px">On</span> <span class="w" style="letter-spacing:0.27px">Track</span></span></td><td class="c"><span class="t cell">2</span></td><td class="c"><span class="t cell" style="word-spacing:-0.35px"><span class="w" style="letter-spacing:1.62px">w</span> <span class="w" style="letter-spacing:0.75px">(within)</span></span></td><td class="c amb"><span class="t cell">3</span></td><td class="c"><span class="t cell">2</span></td><td class="c"><svg class="chev" width="18" height="18" viewBox="0 0 24 24" fill="none" stroke="#2a35a0" stroke-width="2" stroke-linecap="round" stroke-linejoin="round"><path d="m6 17 5-5-5-5"/><path d="m13 17 5-5-5-5"/></svg></td></tr>
<tr><td><a><span class="t scn" style="letter-spacing:0.23px">100007107</span></a></td><td><span class="t cell" style="letter-spacing:0.61px">Samuel</span></td><td><span class="t cell" style="letter-spacing:0.49px">MacLean</span></td><td class="c"></td><td class="c"><span class="t cell" style="letter-spacing:0.54px">Exceeding</span></td><td class="c"><span class="t cell">3</span></td><td class="c"><span class="t cell" style="word-spacing:-0.35px"><span class="w" style="letter-spacing:1.27px">b</span> <span class="w" style="letter-spacing:0.77px">(beginning)</span></span></td><td class="c amb"><span class="t cell">3</span></td><td class="c"><span class="t cell">1</span></td><td class="c"><svg class="chev" width="18" height="18" viewBox="0 0 24 24" fill="none" stroke="#2a35a0" stroke-width="2" stroke-linecap="round" stroke-linejoin="round"><path d="m6 17 5-5-5-5"/><path d="m13 17 5-5-5-5"/></svg></td></tr>
<tr><td><a><span class="t scn" style="letter-spacing:0.61px">100007098</span></a></td><td><span class="t cell" style="letter-spacing:0.26px">Selena</span></td><td><span class="t cell" style="letter-spacing:0.12px">Evans</span></td><td class="c"></td><td class="c"><span class="t cell" style="letter-spacing:0.54px">Exceeding</span></td><td class="c"><span class="t cell">3</span></td><td class="c"><span class="t cell" style="word-spacing:-0.35px"><span class="w" style="letter-spacing:0.56px">c</span> <span class="w" style="letter-spacing:0.81px">(completing)</span></span></td><td class="c"><span class="t cell">1</span></td><td class="c amb"><span class="t cell">3</span></td><td class="c"><svg class="chev" width="18" height="18" viewBox="0 0 24 24" fill="none" stroke="#2a35a0" stroke-width="2" stroke-linecap="round" stroke-linejoin="round"><path d="m6 17 5-5-5-5"/><path d="m13 17 5-5-5-5"/></svg></td></tr>
<tr><td><a><span class="t scn" style="letter-spacing:0.26px">100007106</span></a></td><td><span class="t cell" style="letter-spacing:1.12px">Tatum</span></td><td><span class="t cell" style="letter-spacing:0.91px">Hunter</span></td><td class="c"></td><td class="c"><span class="t cell" style="letter-spacing:0.54px">Exceeding</span></td><td class="c"><span class="t cell">2</span></td><td class="c"><span class="t cell" style="word-spacing:-0.35px"><span class="w" style="letter-spacing:0.56px">c</span> <span class="w" style="letter-spacing:0.81px">(completing)</span></span></td><td class="c"><span class="t cell">2</span></td><td class="c"><span class="t cell">2</span></td><td class="c"><svg class="chev" width="18" height="18" viewBox="0 0 24 24" fill="none" stroke="#2a35a0" stroke-width="2" stroke-linecap="round" stroke-linejoin="round"><path d="m6 17 5-5-5-5"/><path d="m13 17 5-5-5-5"/></svg></td></tr>
<tr><td><a><span class="t scn" style="letter-spacing:0.07px">100007122</span></a></td><td><span class="t cell" style="letter-spacing:0.86px">Timothy</span></td><td><span class="t cell" style="letter-spacing:0.33px">Hay</span></td><td class="c"></td><td class="c"><span class="t cell" style="letter-spacing:0.54px">Exceeding</span></td><td class="c"><span class="t cell">3</span></td><td class="c"><span class="t cell" style="word-spacing:-0.35px"><span class="w" style="letter-spacing:1.27px">b</span> <span class="w" style="letter-spacing:0.77px">(beginning)</span></span></td><td class="c"><span class="t cell">2</span></td><td class="c"><span class="t cell">2</span></td><td class="c"><svg class="chev" width="18" height="18" viewBox="0 0 24 24" fill="none" stroke="#2a35a0" stroke-width="2" stroke-linecap="round" stroke-linejoin="round"><path d="m6 17 5-5-5-5"/><path d="m13 17 5-5-5-5"/></svg></td></tr>
<tr><td><a><span class="t scn" style="letter-spacing:0.33px">100007100</span></a></td><td><span class="t cell" style="letter-spacing:0.56px">Vivienne</span></td><td><span class="t cell" style="letter-spacing:0.41px">Harvey</span></td><td class="c"></td><td class="c"><span class="t cell" style="letter-spacing:0.54px">Exceeding</span></td><td class="c"><span class="t cell">2</span></td><td class="c"><span class="t cell" style="word-spacing:-0.35px"><span class="w" style="letter-spacing:0.56px">c</span> <span class="w" style="letter-spacing:0.81px">(completing)</span></span></td><td class="c amb"><span class="t cell">3</span></td><td class="c"><span class="t cell">2</span></td><td class="c"><svg class="chev" width="18" height="18" viewBox="0 0 24 24" fill="none" stroke="#2a35a0" stroke-width="2" stroke-linecap="round" stroke-linejoin="round"><path d="m6 17 5-5-5-5"/><path d="m13 17 5-5-5-5"/></svg></td></tr>
<tr><td><a><span class="t scn" style="letter-spacing:-0.11px">100007112</span></a></td><td><span class="t cell" style="letter-spacing:0.66px">Waylon</span></td><td><span class="t cell" style="letter-spacing:0.75px">Main</span></td><td class="c"></td><td class="c"><span class="t cell" style="letter-spacing:0.54px">Exceeding</span></td><td class="c"><span class="t cell">3</span></td><td class="c"><span class="t cell" style="word-spacing:-0.35px"><span class="w" style="letter-spacing:1.62px">w</span> <span class="w" style="letter-spacing:0.75px">(within)</span></span></td><td class="c"><span class="t cell">2</span></td><td class="c"><span class="t cell">2</span></td><td class="c"><svg class="chev" width="18" height="18" viewBox="0 0 24 24" fill="none" stroke="#2a35a0" stroke-width="2" stroke-linecap="round" stroke-linejoin="round"><path d="m6 17 5-5-5-5"/><path d="m13 17 5-5-5-5"/></svg></td></tr>
<tr><td><a><span class="t scn" style="letter-spacing:0.19px">100007103</span></a></td><td><span class="t cell" style="letter-spacing:0.59px">Zuri</span></td><td><span class="t cell" style="letter-spacing:0.1px">Cassidy</span></td><td class="c"></td><td class="c"><span class="t cell" style="word-spacing:-0.35px"><span class="w" style="letter-spacing:0.81px">On</span> <span class="w" style="letter-spacing:0.27px">Track</span></span></td><td class="c"><span class="t cell">2</span></td><td class="c"><span class="t cell" style="word-spacing:-0.35px"><span class="w" style="letter-spacing:0.56px">c</span> <span class="w" style="letter-spacing:0.81px">(completing)</span></span></td><td class="c"><span class="t cell">2</span></td><td class="c"><span class="t cell">2</span></td><td class="c"><svg class="chev" width="18" height="18" viewBox="0 0 24 24" fill="none" stroke="#2a35a0" stroke-width="2" stroke-linecap="round" stroke-linejoin="round"><path d="m6 17 5-5-5-5"/><path d="m13 17 5-5-5-5"/></svg></td></tr>
</tbody>
</table>
</div>

</body></html>
